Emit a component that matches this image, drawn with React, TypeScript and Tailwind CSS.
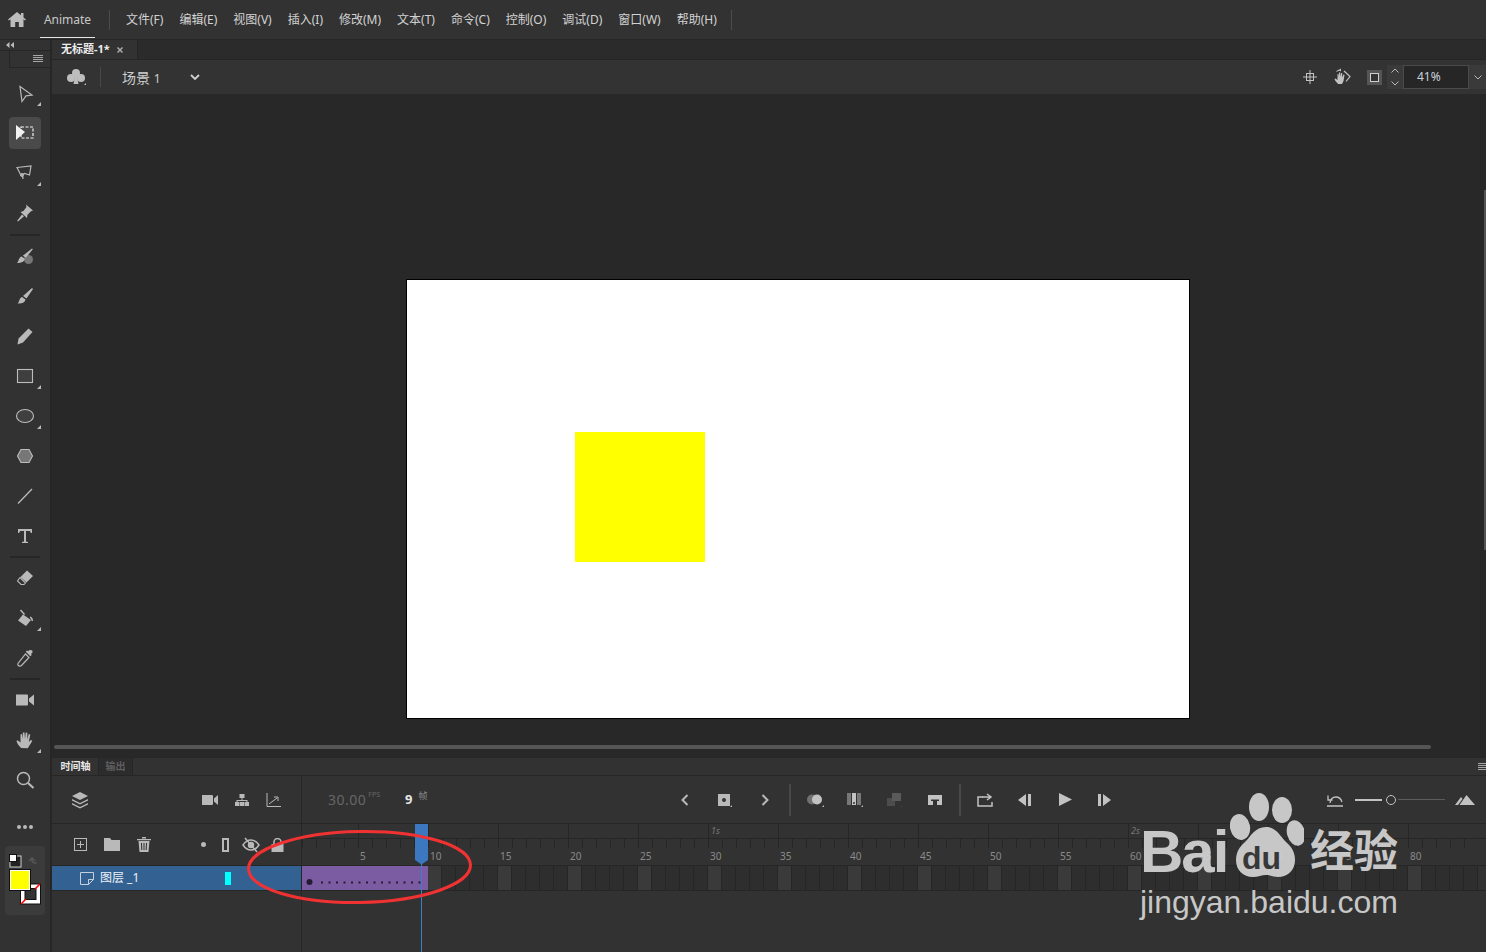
import type { ReactNode } from "react";

const menus = ["文件(F)", "编辑(E)", "视图(V)", "插入(I)", "修改(M)", "文本(T)", "命令(C)", "控制(O)", "调试(D)", "窗口(W)", "帮助(H)"];
const frames = Array.from({ length: 84 }, (_, i) => i + 1);
const majors = Array.from({ length: 16 }, (_, i) => (i + 1) * 5);

const Ico = ({ children, s = 20, className = "" }: { children: ReactNode; s?: number; className?: string }) => (
  <svg width={s} height={s} viewBox="0 0 20 20" fill="#b9b9b9" stroke="none" className={"shrink-0 " + className}>
    {children}
  </svg>
);

const Corner = () => (
  <svg width="4" height="4" viewBox="0 0 4 4" className="absolute right-[9px] bottom-[7px]">
    <polygon points="4,0 4,4 0,4" fill="#b9b9b9" />
  </svg>
);

const Tool = ({ children, corner, active, h = "h-10" }: { children: ReactNode; corner?: boolean; active?: boolean; h?: string }) => (
  <div className={"relative flex w-[50px] items-center justify-center " + h}>
    {active && <div className="absolute left-[9px] top-[4px] h-8 w-8 rounded bg-[#4a4a4a]" />}
    <div className="relative flex">{children}</div>
    {corner && <Corner />}
  </div>
);

const Divider = ({ h }: { h: string }) => (
  <div className={"flex w-[50px] items-center justify-center " + h}>
    <div className="h-[2px] w-[30px] bg-[#262626]" />
  </div>
);

const Slot = ({ children, className = "" }: { children: ReactNode; className?: string }) => (
  <div className={"relative flex h-5 w-5 shrink-0 items-center justify-center " + className}>{children}</div>
);

const Burger = () => (
  <svg width="10" height="8" viewBox="0 0 10 8">
    <path d="M0 .5h10M0 2.5h10M0 4.5h10M0 6.5h10" stroke="#a8a8a8" strokeWidth="1" />
  </svg>
);

function LeftTools() {
  return (
    <div className="relative flex w-[50px] flex-col">
      <div className="flex h-[11px] items-center border-b border-[#262626] pl-[6px] text-[8px] leading-none text-[#bbb]">
        <svg width="8" height="6" viewBox="0 0 8 6"><path d="M3.5 0v6L0 3zM8 0v6L4.500 3z" fill="#bbb" /></svg>
      </div>
      <div className="flex h-[17px] items-center justify-end border-b border-l border-[#262626] ml-[9px] pr-[7px]">
        <Burger />
      </div>
      <div className="h-[7px]" />
      <Tool h="h-[38px]" corner>
        <Ico><path d="M5 2.500 17 11l-6 .8L7 17.500z" fill="none" stroke="#b9b9b9" strokeWidth="1.200" /></Ico>
      </Tool>
      <Tool active>
        <Ico>
          <path d="M1 2l9 7-9 8z" fill="#f2f2f2" />
          <rect x="6" y="4" width="12" height="11" fill="none" stroke="#f2f2f2" strokeWidth="1.200" strokeDasharray="3 1.500" />
        </Ico>
      </Tool>
      <Tool corner>
        <Ico>
          <path d="M2 4.500l14-1.500-1.500 9-5-1.500-3.500 2z" fill="none" stroke="#b9b9b9" strokeWidth="1.200" />
          <path d="M6 11c1.500 1 2 2.500 2 5" fill="none" stroke="#b9b9b9" strokeWidth="1.200" />
          <circle cx="7" cy="12" r="1.500" fill="none" stroke="#b9b9b9" />
        </Ico>
      </Tool>
      <Tool>
        <Ico><path d="M11 1.500l7 6-2 .8-3.500 3.500-.5 3.200-6.500-6L8.500 8 11.500 4zM7 11.500l2 1.800L3 18.500l-.8-.8z" /></Ico>
      </Tool>
      <Divider h="h-[3px]" />
      <Tool>
        <Ico>
          <circle cx="13.500" cy="13.500" r="4.500" fill="#777" />
          <path d="M17 2.500l.8.800-7 8.500-3-2zM6.500 10.500l3.300 2.300c-.5 3-3.500 4.200-7.800 4.200 2-1.500 1.500-5.500 4.500-6.500z" />
        </Ico>
      </Tool>
      <Tool>
        <Ico><path d="M17 2l1 1-6.500 9.500L8 10zM7 11l3.500 2.500c-.5 3-3.500 4.500-8 4 2-1 1.500-5.500 4.500-6.500z" /></Ico>
      </Tool>
      <Tool>
        <Ico><path d="M13.500 2.500l4 3.500L8 16.500l-5.500 2 1-6zM5 13.500l2 1.700" /></Ico>
      </Tool>
      <Tool corner>
        <Ico><rect x="2.500" y="3.500" width="15" height="13" fill="#3f3f3f" stroke="#bdbdbd" strokeWidth="1.100" /></Ico>
      </Tool>
      <Tool corner>
        <Ico><ellipse cx="10" cy="10" rx="8.500" ry="6.500" fill="#3f3f3f" stroke="#bdbdbd" strokeWidth="1.100" /></Ico>
      </Tool>
      <Tool>
        <Ico><polygon points="6,3.500 14,3.500 17.500,10 14,16.500 6,16.500 2.500,10" fill="#777" stroke="#bdbdbd" strokeWidth="1.100" /></Ico>
      </Tool>
      <Tool>
        <Ico><path d="M3 17.500L17 3" stroke="#b9b9b9" strokeWidth="1.300" /></Ico>
      </Tool>
      <Tool>
        <Ico><path d="M3 3h14v4h-1.200c-.3-1.500-.8-2-2-2H11v10.500l2 .4V17H7v-1.100l2-.4V5H6.200c-1.200 0-1.700.5-2 2H3z" /></Ico>
      </Tool>
      <Divider h="h-[2px]" />
      <Tool>
        <Ico>
          <path d="M12 2.500l6 5.500-6.500 6.500-6-5.500z" />
          <path d="M5 9.500l5.500 5.500-1.500 1.500H6L2.500 13z" fill="none" stroke="#b9b9b9" strokeWidth="1.100" />
        </Ico>
      </Tool>
      <Tool corner>
        <Ico>
          <path d="M8 6.500l8 5.500-5 6-8-5.500z" />
          <path d="M5.500 2l4 4.500" stroke="#b9b9b9" strokeWidth="1.500" />
          <path d="M15 8.500c2 .5 3 2 3 4.500h-1.500c0-1.500-.5-2.500-1.500-3z" />
        </Ico>
      </Tool>
      <Tool>
        <Ico>
          <path d="M14 2.500c1.500-1 4-.5 3.500 2l-1.500 1.500.8 1-1.500 1.200-4.500-4.500 1.200-1.200 1 .8z" />
          <path d="M10.500 6l3.500 3.500-7.500 8c-1.500 1.200-4.500.5-3.500-2z" fill="none" stroke="#b9b9b9" strokeWidth="1.200" />
        </Ico>
      </Tool>
      <Divider h="h-[2px]" />
      <Tool>
        <Ico><path d="M1 4.500h11a1 1 0 0 1 1 1v9a1 1 0 0 1-1 1H1zM14 8.500l5-4v11l-5-4z" /></Ico>
      </Tool>
      <Tool corner>
        <Ico><path d="M6 18c-1.500-2-4-4-4.500-7l1-.8 3 2.300V4.500l1.500-.5.8 5V2.500h1.700l.5 6.500.7-6.500 1.700.3-.2 6.700 1.600-5.500 1.500.5-1.500 7.500 2-2 1.500.7c-1 2-3 5-4.500 7.500z" /></Ico>
      </Tool>
      <Tool>
        <Ico>
          <circle cx="8.500" cy="8.500" r="6" fill="none" stroke="#b9b9b9" strokeWidth="1.500" />
          <path d="M13 13l5.500 5" stroke="#b9b9b9" strokeWidth="2.200" />
        </Ico>
      </Tool>
      <div className="flex h-[46px] items-center justify-center gap-[2px] pt-[7px]">
        <div className="h-1 w-1 rounded-full bg-[#b9b9b9]" />
        <div className="h-1 w-1 rounded-full bg-[#b9b9b9]" />
        <div className="h-1 w-1 rounded-full bg-[#b9b9b9]" />
      </div>
      <div className="ml-[5px] h-[69px] w-10 rounded bg-[#3b3b3b] pl-[4px] pt-[8px]">
        <svg width="34" height="52" viewBox="0 0 34 52">
          <rect x="1" y="2" width="11" height="11" fill="#222" stroke="#cfcfcf" />
          <rect x="0.500" y="0.500" width="7" height="7" fill="#fff" stroke="#111" />
          <path d="M20 9l3-3 3 3M23 6v2c0 2 1 3 3 3h2" transform="translate(0 -2)" fill="none" stroke="#555" strokeWidth="1.600" />
          <rect x="11.500" y="30" width="20" height="20" fill="#fff" stroke="#111" />
          <rect x="16" y="34.500" width="11" height="11" fill="#333" stroke="#111" />
          <path d="M26 35l5-5M12 50l5-5" stroke="#f00" strokeWidth="1.500" />
          <rect x="0.500" y="15.500" width="21" height="21" fill="#ffff00" stroke="#111" />
          <rect x="1.500" y="16.500" width="19" height="19" fill="none" stroke="#fff" />
        </svg>
      </div>
    </div>
  );
}

function TopBar() {
  return (
    <div className="flex h-[40px] shrink-0 items-center border-b border-[#262626] bg-[#323232]">
      <div className="ml-[8px] flex w-[18px]">
        <svg width="18" height="15" viewBox="0 0 18 15">
          <path d="M9 0 0 7.500l.9 1L2.500 7.200V15h4.700v-5h3.600v5h4.700V7.200l1.600 1.300.9-1-2.500-2.100V1h-2.500v2.300z" fill="#bdbdbd" />
        </svg>
      </div>
      <div className="relative ml-[14px] flex h-[39px] w-[55px] items-center justify-center text-[12px] text-[#c8c8c8]">
        Animate
        <div className="absolute bottom-[1px] left-0 h-[1px] w-[55px] bg-[#e6e6e6]" />
      </div>
      <div className="ml-[14px] h-5 w-[1px] bg-[#4c4c4c]" />
      <div className="ml-[16px] flex gap-[16px] text-[12px] whitespace-nowrap text-[#d2d2d2]">
        {menus.map((m) => (
          <span key={m}>{m}</span>
        ))}
      </div>
      <div className="ml-[14px] h-5 w-[1px] bg-[#4c4c4c]" />
    </div>
  );
}

function SceneBar() {
  return (
    <div className="flex h-[34px] shrink-0 items-center bg-[#333333]">
      <div className="relative ml-[14px] flex w-5 justify-center">
        <svg width="20" height="18" viewBox="0 0 20 18">
          <circle cx="10" cy="5" r="4" fill="#bdbdbd" />
          <circle cx="5" cy="10" r="4" fill="#bdbdbd" />
          <circle cx="15" cy="10" r="4" fill="#bdbdbd" />
          <path d="M9 8h2l1.500 8h-5z" fill="#bdbdbd" />
          <path d="M18 17h2v-2z" fill="#bdbdbd" />
        </svg>
      </div>
      <div className="ml-[14px] h-5 w-[1px] bg-[#484848]" />
      <div className="ml-[21px] w-[68px] text-[14px] whitespace-nowrap text-[#cfcfcf]">场景 <span className="text-[12px]">1</span></div>
      <svg width="10" height="6" viewBox="0 0 10 6" className="ml-0">
        <path d="M1 1l4 4 4-4" fill="none" stroke="#d0d0d0" strokeWidth="1.800" />
      </svg>
      <div className="ml-auto flex h-full items-center">
        <Slot>
          <svg width="14" height="14" viewBox="0 0 14 14" fill="none" stroke="#c2c2c2">
            <rect x="3.500" y="3.500" width="7" height="7" />
            <path d="M7 0v14M0 7h14" />
          </svg>
        </Slot>
        <Slot className="ml-[12px]">
          <svg width="18" height="18" viewBox="0 0 18 18">
            <path d="M5 16c-1-1.500-3-3-3.500-5l1-.5L4.500 12V6l1 0 .5 3V4.500h1.200L7.500 9l.6-4 1.200.2L9 9.500l1.500-3 1 .5L10.500 13l-1.500 3z" fill="#c2c2c2" />
            <path d="M11 3l6 5.500-4 5" fill="none" stroke="#c2c2c2" strokeWidth="1.200" />
            <path d="M3 4c1-2 3-3 5-2M8 .5V3.500L5.500 2z" fill="#c2c2c2" />
          </svg>
        </Slot>
        <Slot className="ml-[12px]">
          <div className="flex h-[15px] w-[15px] items-center justify-center bg-[#555]">
            <div className="h-[9px] w-[9px] border border-[#d0d0d0] bg-[#333]" />
          </div>
        </Slot>
        <div className="ml-[3px] flex h-[24px] w-[16px] flex-col items-center justify-between bg-[#3a3a3a] py-[3px]">
          <svg width="8" height="5" viewBox="0 0 8 5"><path d="M.5 4.500L4 1l3.500 3.500" fill="none" stroke="#b9b9b9" /></svg>
          <svg width="8" height="5" viewBox="0 0 8 5"><path d="M.5.500L4 4l3.500-3.500" fill="none" stroke="#b9b9b9" /></svg>
        </div>
        <div className="flex h-[24px] w-[66px] items-center border border-[#4b4b4b] bg-[#262626] pl-[13px] text-[12px] text-[#c8d2dc]">41%</div>
        <div className="flex h-[24px] w-[17px] items-center justify-center bg-[#3a3a3a]">
          <svg width="8" height="5" viewBox="0 0 8 5"><path d="M.5.500L4 4l3.500-3.500" fill="none" stroke="#b9b9b9" /></svg>
        </div>
      </div>
    </div>
  );
}

function Canvas() {
  return (
    <div className="relative min-h-0 flex-1 bg-[#282828] pl-[354px] pt-[185px]">
      <div className="relative h-[440px] w-[784px] border border-black bg-white">
        <div className="absolute left-[168px] top-[152px] h-[130px] w-[130px] bg-[#ffff00]" />
      </div>
      <div className="absolute bottom-[8px] left-[2px] h-1 w-[1377px] rounded-full bg-[#555]" />
      <div className="absolute right-0 top-[96px] h-[360px] w-[2px] bg-[#555]" />
    </div>
  );
}

function TimelineToolbar() {
  return (
    <div className="flex h-[48px] shrink-0 items-center border-b border-[#262626]">
      <div className="flex h-full w-[250px] shrink-0 items-center border-r border-[#262626] pl-[18px]">
        <Slot>
          <svg width="18" height="18" viewBox="0 0 18 18" fill="#b9b9b9">
            <path d="M9 1l8 4-8 4-8-4z" />
            <path d="M1 8l8 4 8-4v1.500l-8 4-8-4z" />
            <path d="M1 12l8 4 8-4v1.500l-8 4-8-4z" />
          </svg>
        </Slot>
        <Slot className="ml-[110px]">
          <svg width="16" height="12" viewBox="0 0 16 12" fill="#b9b9b9"><path d="M0 1h10a1 1 0 0 1 1 1v8a1 1 0 0 1-1 1H0zM12 4.500L16 1v10l-4-3.500z" /></svg>
        </Slot>
        <Slot className="ml-[12px]">
          <svg width="14" height="14" viewBox="0 0 14 14" fill="#b9b9b9">
            <rect x="4.500" y="1" width="5" height="4" />
            <rect x="0" y="9" width="4.500" height="4" />
            <rect x="9.500" y="9" width="4.500" height="4" />
            <rect x="5" y="9" width="4" height="4" />
            <path d="M6.500 5h1v2h5v2h-1V8h-9v1h-1V7h5z" />
          </svg>
        </Slot>
        <Slot className="ml-[11px]">
          <svg width="15" height="14" viewBox="0 0 15 14" fill="none" stroke="#b9b9b9">
            <path d="M1 0v13.500h14" />
            <path d="M3 11l8-6M8 4h4v4" />
          </svg>
        </Slot>
      </div>
      <div className="flex w-[373px] shrink-0 items-center pl-[26px] whitespace-nowrap">
        <span className="text-[14px] tracking-[0.5px] text-[#666]">30.00</span>
        <span className="mb-[8px] ml-[2px] text-[7px] text-[#666]">FPS</span>
        <span className="ml-[25px] text-[13px] font-bold text-[#e6e6e6]">9</span>
        <span className="mb-[8px] ml-[6px] text-[9px] text-[#8a8a8a]">帧</span>
      </div>
      <div className="flex items-center gap-[20px]">
        <Slot>
          <svg width="8" height="12" viewBox="0 0 8 12"><path d="M6.500 1L1.500 6l5 5" fill="none" stroke="#b9b9b9" strokeWidth="2" /></svg>
        </Slot>
        <Slot>
          <svg width="14" height="14" viewBox="0 0 14 14"><rect x="0" y="1" width="12" height="12" fill="#b9b9b9" /><circle cx="6" cy="7" r="2" fill="#333" /><path d="M14 12v2h-2z" fill="#b9b9b9" /></svg>
        </Slot>
        <Slot>
          <svg width="8" height="12" viewBox="0 0 8 12"><path d="M1.500 1l5 5-5 5" fill="none" stroke="#b9b9b9" strokeWidth="2" /></svg>
        </Slot>
      </div>
      <div className="ml-[14px] h-8 w-[2px] bg-[#484848]" />
      <div className="ml-[14px] flex items-center gap-[20px]">
        <Slot>
          <svg width="18" height="14" viewBox="0 0 18 14"><circle cx="6" cy="6.500" r="5" fill="#707070" /><circle cx="11" cy="6.500" r="5" fill="#c2c2c2" /><path d="M18 12v2h-2z" fill="#b9b9b9" /></svg>
        </Slot>
        <Slot>
          <svg width="16" height="14" viewBox="0 0 16 14"><rect x="0" y="0" width="4" height="12" fill="#777" /><rect x="5" y="0" width="4" height="12" fill="#c2c2c2" /><rect x="10" y="0" width="4" height="12" fill="#777" /><circle cx="7" cy="10" r="1" fill="#333" /><path d="M16 12v2h-2z" fill="#b9b9b9" /></svg>
        </Slot>
        <Slot>
          <svg width="16" height="14" viewBox="0 0 16 14"><rect x="0" y="5" width="8" height="8" fill="#4c4c4c" /><rect x="5" y="0" width="9" height="8" fill="#5a5a5a" /><path d="M15 13v1h-1z" fill="#666" /></svg>
        </Slot>
        <Slot>
          <svg width="14" height="10" viewBox="0 0 14 10"><path d="M0 0h14v10H9V6h2V4.500H3V6h2v4H0z" fill="#c2c2c2" /></svg>
        </Slot>
      </div>
      <div className="ml-[14px] h-8 w-[2px] bg-[#484848]" />
      <div className="ml-[14px] flex items-center gap-[20px]">
        <Slot>
          <svg width="16" height="14" viewBox="0 0 16 14" fill="none" stroke="#c2c2c2" strokeWidth="1.500"><path d="M6 4H1v9h14V9" /><path d="M5 4h8M10 1l4 3-4 3" /></svg>
        </Slot>
        <Slot>
          <svg width="14" height="12" viewBox="0 0 14 12" fill="#c2c2c2"><path d="M8 0v12L0 6z" /><rect x="10" y="0" width="3" height="12" /></svg>
        </Slot>
        <Slot>
          <svg width="13" height="13" viewBox="0 0 13 13" fill="#c2c2c2"><path d="M0 0l13 6.500L0 13z" /></svg>
        </Slot>
        <Slot className="-ml-[1px]">
          <svg width="14" height="12" viewBox="0 0 14 12" fill="#c2c2c2"><rect x="1" y="0" width="3" height="12" /><path d="M6 0v12l8-6z" /></svg>
        </Slot>
      </div>
      <Slot className="ml-[211px]">
        <svg width="16" height="14" viewBox="0 0 16 14" fill="none" stroke="#c2c2c2" strokeWidth="1.300"><path d="M0 13h16M3 10c.5-4 3-6 6-6s5 2 6 5M1 2.500v4.500h4.500" /></svg>
      </Slot>
      <div className="ml-[10px] h-[2px] w-[27px] bg-[#c2c2c2]" />
      <div className="ml-[4px] h-[10px] w-[10px] rounded-full border-[1.500px] border-[#c2c2c2]" />
      <div className="ml-[2px] h-[1px] w-[47px] bg-[#5c5c5c]" />
      <Slot className="ml-[10px]">
        <svg width="20" height="10" viewBox="0 0 20 10" fill="#c2c2c2"><path d="M0 10l6-8 1.500 2-4.500 6zM4.500 10l7-10 8.500 10z" /></svg>
      </Slot>
    </div>
  );
}

function Ruler() {
  return (
    <div className="flex min-w-0 flex-1 flex-col">
      <div className="flex h-[15px] shrink-0 border-b border-[#262626]">
        <div className="w-[56px] shrink-0" />
        {majors.map((m) => (
          <div key={m} className="w-[70px] shrink-0 border-l border-[#262626] pl-[2px] text-[9px] leading-[14px] italic text-[#777]">
            {m === 30 ? "1s" : m === 60 ? "2s" : ""}
          </div>
        ))}
      </div>
      <div className="flex h-[27px] shrink-0 border-b border-[#262626]">
        {frames.map((f) => (
          <div key={f} className="relative w-[14px] shrink-0 pl-[2px] text-[10px] leading-none whitespace-nowrap text-[#8a8a8a]">
            <div className="absolute left-0 top-0 h-[9px] w-[1px] bg-[#262626]" />
            <div className="pt-[12px]">{f % 5 === 0 ? f : ""}</div>
          </div>
        ))}
      </div>
    </div>
  );
}

function Timeline() {
  return (
    <div className="flex h-[195px] shrink-0 flex-col border-t border-[#262626] bg-[#323232]">
      <div className="flex h-[18px] shrink-0 items-center justify-between border-b border-[#262626]">
        <div className="flex h-full">
          <div className="flex w-[46px] items-center justify-center bg-[#323232] pl-[1px] text-[10px] font-bold text-[#e8e8e8]">时间轴</div>
          <div className="flex w-[35px] items-center justify-center border-x border-[#262626] bg-[#2c2c2c] text-[10px] font-bold text-[#5f5f5f]">输出</div>
        </div>
        <div className="mr-0 flex w-[8px] overflow-hidden">
          <div className="shrink-0"><Burger /></div>
        </div>
      </div>
      <TimelineToolbar />
      <div className="flex h-[42px] shrink-0">
        <div className="flex w-[250px] shrink-0 items-center border-r border-b border-[#262626] pl-[18px]">
          <Slot>
            <svg width="13" height="13" viewBox="0 0 13 13" fill="none" stroke="#b9b9b9"><rect x=".5" y=".5" width="12" height="12" /><path d="M6.500 3v7M3 6.500h7" /></svg>
          </Slot>
          <Slot className="ml-[12px]">
            <svg width="16" height="13" viewBox="0 0 16 13" fill="#b9b9b9"><path d="M0 0h6l1.500 2H16v11H0z" /></svg>
          </Slot>
          <Slot className="ml-[12px]">
            <svg width="14" height="15" viewBox="0 0 14 15" fill="#b9b9b9"><path d="M0 2h14v1.200H0zM5 0h4v1.500H5zM1.500 4h11l-1 11h-9zM4 6l.3 7h1l-.3-7zM6.500 6v7h1V6zM9 6l-.3 7h1l.3-7z" fillRule="evenodd" /></svg>
          </Slot>
          <Slot className="ml-[39px]">
            <div className="h-[5px] w-[5px] rounded-full bg-[#b9b9b9]" />
          </Slot>
          <Slot className="ml-[2px]">
            <div className="h-[14px] w-[7px] border-2 border-[#b9b9b9]" />
          </Slot>
          <Slot className="ml-[6px]">
            <svg width="18" height="16" viewBox="0 0 18 16" fill="none" stroke="#b9b9b9" strokeWidth="1.500"><path d="M1 8c2-3 5-5 8-5s6 2 8 5c-2 3-5 5-8 5s-6-2-8-5z" /><circle cx="9" cy="8" r="2.500" fill="#b9b9b9" /><path d="M3 1l12 14" /></svg>
          </Slot>
          <Slot className="ml-[6px]">
            <svg width="13" height="14" viewBox="0 0 13 14"><path d="M3 6V4a3.500 3.500 0 0 1 7 0v2" fill="none" stroke="#b9b9b9" strokeWidth="1.500" /><rect x="0.500" y="6" width="12" height="8" fill="#b9b9b9" /></svg>
          </Slot>
        </div>
        <Ruler />
      </div>
      <div className="flex h-[25px] shrink-0">
        <div className="flex w-[250px] shrink-0 items-center border-r border-b border-[#262626] bg-[#336292]">
          <svg width="14" height="14" viewBox="0 0 14 14" fill="none" stroke="#c4d0dc" className="ml-[28px]"><path d="M.5 1.500h13v7l-5 5h-8zM13.500 8.500h-5v5" /></svg>
          <span className="ml-[6px] text-[12px] whitespace-nowrap text-[#eef2f6]">图层 _1</span>
          <div className="ml-[86px] h-[13px] w-[6px] bg-[#00ffff]" />
        </div>
        <div className="flex min-w-0 flex-1 border-b border-[#262626]">
          <div className="h-full w-[126px] shrink-0 bg-[#7b5ba1] pt-[12px] pl-[4px]">
            <svg width="120" height="8" viewBox="0 0 120 8">
              <circle cx="3.500" cy="4" r="3" fill="#241b33" />
              <path d="M15 4.500h104" stroke="#241b33" strokeWidth="2" strokeDasharray="2 5.500" />
            </svg>
          </div>
          {frames.slice(9).map((f) => (
            <div key={f} className={"h-full w-[14px] shrink-0 border-r border-[#262626] " + (f % 5 === 0 ? "bg-[#3a3a3a]" : "bg-[#2e2e2e]")} />
          ))}
        </div>
      </div>
      <div className="flex min-h-0 flex-1">
        <div className="w-[250px] shrink-0 border-r border-[#262626]" />
      </div>
    </div>
  );
}

export default function App() {
  return (
    <div className="relative flex h-[952px] w-[1486px] flex-col overflow-hidden bg-[#323232] font-['Noto_Sans','Noto_Sans_CJK_SC',sans-serif]">
      <TopBar />
      <div className="flex min-h-0 flex-1">
        <div className="shrink-0 border-r-2 border-[#262626]">
          <LeftTools />
        </div>
        <div className="flex min-w-0 flex-1 flex-col">
          <div className="flex h-[20px] shrink-0 border-b border-[#262626] bg-[#2b2b2b]">
            <div className="flex w-[86px] items-center border-r border-[#262626] bg-[#323232] pl-[9px] text-[11px] font-bold whitespace-nowrap text-[#ececec]">
              无标题-1*
              <svg width="6" height="6" viewBox="0 0 6 6" className="ml-[7px]"><path d="M.5.500l5 5M5.500.500l-5 5" stroke="#aaa" strokeWidth="1.500" /></svg>
            </div>
          </div>
          <SceneBar />
          <Canvas />
          <Timeline />
        </div>
      </div>

      {/* playhead */}
      <svg width="16" height="129" viewBox="0 0 16 129" className="absolute left-[414px] top-[823px]">
        <path d="M7.500 40v89" stroke="#3f7fc9" />
        <path d="M1 1h13v36l-6.500 4.500L1 37z" fill="#3b78c0" />
      </svg>

      {/* red annotation */}
      <svg width="232" height="84" viewBox="0 0 232 84" className="absolute left-[244px] top-[824px]">
        <ellipse cx="115.500" cy="43" rx="111" ry="35.500" fill="none" stroke="#f13232" strokeWidth="3" transform="rotate(-1 115.500 43)" />
      </svg>

      {/* watermark */}
      <div className="absolute left-[1140px] top-[790px] h-[130px] w-[270px] font-['Liberation_Sans','Noto_Sans_CJK_SC',sans-serif] text-[#d0d0d0]">
        <span className="absolute left-0 top-[32px] text-[60px] leading-[60px] font-bold tracking-[-2px] opacity-95">Bai</span>
        <svg width="74" height="92" viewBox="0 0 74 92" className="absolute left-[90px] top-0 opacity-95">
          <ellipse cx="29" cy="17" rx="10" ry="14" fill="#d0d0d0" />
          <ellipse cx="52" cy="20" rx="10" ry="13" fill="#d0d0d0" />
          <ellipse cx="10" cy="37" rx="10" ry="13" transform="rotate(-12 10 37)" fill="#d0d0d0" />
          <ellipse cx="66" cy="43" rx="9" ry="13" transform="rotate(-15 66 43)" fill="#d0d0d0" />
          <path d="M36 37c10 0 14 9 20 15 6 5 9 11 9 18 0 10-7 17-17 17-5 0-8-2-12-2s-8 2-13 2C13 87 6 80 6 70c0-7 3-13 9-18 6-6 10-15 21-15z" fill="#d0d0d0" />
        </svg>
        <span className="absolute left-[102px] top-[52px] text-[32px] leading-[32px] font-bold text-[#383838]">du</span>
        <span className="absolute left-[170px] top-[37px] text-[44px] leading-[50px] font-bold whitespace-nowrap opacity-95">经验</span>
        <span className="absolute left-0 top-[94px] text-[32px] leading-[36px] whitespace-nowrap opacity-95">jingyan.baidu.com</span>
      </div>
    </div>
  );
}
